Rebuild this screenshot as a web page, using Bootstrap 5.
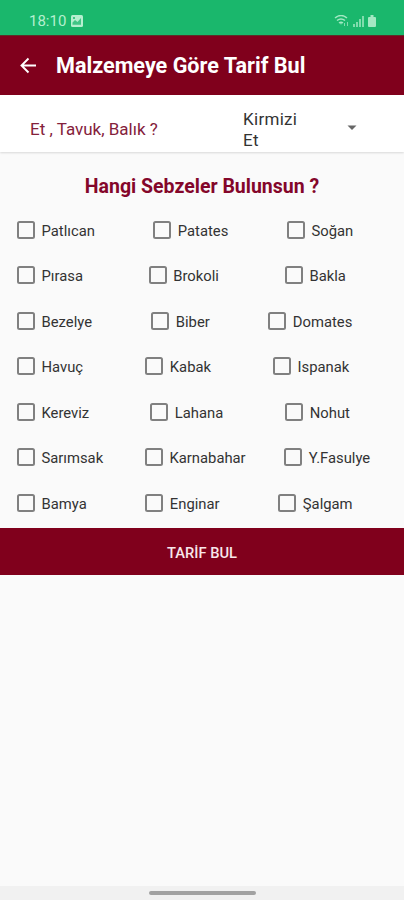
<!DOCTYPE html>
<html lang="tr">
<head>
<meta charset="utf-8">
<meta name="viewport" content="width=device-width, initial-scale=1">
<title>Malzemeye Göre Tarif Bul</title>
<link href="https://cdn.jsdelivr.net/npm/bootstrap@5.3.0/dist/css/bootstrap.min.css" rel="stylesheet">
<style>
body{font-family:Roboto,"Liberation Sans",sans-serif;background:#fafafa;height:900px;color:#333;overflow:hidden}
.status-strip{height:35px;background:#1ab76c;color:#b5efcf;font-size:15px;line-height:1;padding:7px 26px 0 29px}
.clock{padding-top:7px}
.title-bar{height:60px;background:#80001c;color:#fff;padding:0 20px 1px;border-top:1px solid #5c3028}
.title-bar h1{font-size:21.6px;line-height:1;padding:2px 0 0 19px;white-space:nowrap;font-weight:700}
.filter-bar{height:57px;background:#fff;padding-left:30px;box-shadow:0 1px 2px #0002}
.filter-name{width:213px;font-size:17px;color:#84213b;padding-top:22px}
.filter-value{width:104px;font-size:17px;line-height:21px;padding-top:14px;letter-spacing:.3px}
.filter-value span{display:block;width:60px}
.section-title{height:58px;padding-top:25px;font-size:19.5px;font-weight:700;color:#84062a;line-height:1}
.veg-row{height:45.45px;padding:11px 0 0 17px;font-size:14.8px;line-height:20px}
.veg-row .form-check{flex:none;gap:6.5px;min-height:0}
.veg-row .form-check-input{width:18px;height:18px;margin:0;float:none;border:2px solid #808080;border-radius:2.5px;background-color:transparent;flex:none}
.veg-row .form-check:first-child{width:var(--a)}
.veg-row .form-check:nth-child(2){width:var(--b)}
.r1{--a:136.3px;--b:133.7px}.r2{--a:131.7px;--b:136.3px}.r3{--a:134.3px;--b:117px}
.r4{--a:128.3px;--b:127.7px}.r5{--a:133.3px;--b:135px}.r6{--a:128px;--b:139.3px}.r7{--a:128.3px;--b:133px}
.find-btn{height:47px;background:#80001c;color:#f8e6ea;font-size:14.7px;font-weight:500;border:0}
.find-btn span{display:block;padding-top:2px}
.find-btn:hover{background:#6a0017;color:#fff}
.nav-strip{height:14px;background:#f1f1f1;padding-top:5px}
.nav-pill{width:107px;height:4px;background:#a2a2a2}
</style>
</head>
<body class="d-flex flex-column">
<div class="status-strip d-flex">
  <span class="clock">18:10</span>
  <svg class="ms-1 mt-2" width="14" height="12" viewBox="0 0 14 12"><rect x="1" width="12" height="12" rx="1.5" fill="#b5efcf"/><path d="M2.500 9.800V7.500L5 5l2.500 2 3.500-4v6.800z" fill="#1ab76c" opacity=".75"/><circle cx="4" cy="3" r="1" fill="#1ab76c"/></svg>
  <svg class="ms-auto mt-2" width="44" height="13" viewBox="0 0 44 13" fill="#a3e8c3"><path d="M1 3q6-5 12 0M3 5.500q4-3.200 8 0M5 8q2-1.500 4 0" fill="none" stroke="#a3e8c3" stroke-width="1.500"/><path d="M6 8h2L7 10zM10 8h1v3h-1zM13 7h1v4h-1zM19 9h2v3h-2zM22 7h2v5h-2zM25 4h2v8h-2zM28 1h2v11h-2z" opacity=".75"/><path d="M36.500 2V0h3v2h1.500q1 0 1 1v8q0 1-1 1h-6q-1 0-1-1V3q0-1 1-1z"/></svg>
</div>
<header class="title-bar d-flex align-items-center">
  <svg width="17" height="17" viewBox="0 0 17 17" fill="none" stroke="#fff" stroke-width="1.900"><path d="M16 8.500H2M8.500 1.500l-7 7 7 7"/></svg>
  <h1 class="mb-0">Malzemeye Göre Tarif Bul</h1>
</header>
<section class="filter-bar d-flex align-items-start">
  <div class="filter-name d-flex">Et , Tavuk, Balık ?</div>
  <div class="filter-value"><span>Kirmizi Et</span></div>
  <svg class="mt-4" width="10" height="18" viewBox="0 0 10 18"><path d="M.5 6.500h9L5 11z" fill="#666"/></svg>
</section>
<main>
  <h2 class="section-title text-center mb-0">Hangi Sebzeler Bulunsun ?</h2>
  <div class="veg-row r1 d-flex"><label class="form-check d-flex p-0 m-0"><input class="form-check-input" type="checkbox">Patlıcan</label><label class="form-check d-flex p-0 m-0"><input class="form-check-input" type="checkbox">Patates</label><label class="form-check d-flex p-0 m-0"><input class="form-check-input" type="checkbox">Soğan</label></div>
  <div class="veg-row r2 d-flex"><label class="form-check d-flex p-0 m-0"><input class="form-check-input" type="checkbox">Pırasa</label><label class="form-check d-flex p-0 m-0"><input class="form-check-input" type="checkbox">Brokoli</label><label class="form-check d-flex p-0 m-0"><input class="form-check-input" type="checkbox">Bakla</label></div>
  <div class="veg-row r3 d-flex"><label class="form-check d-flex p-0 m-0"><input class="form-check-input" type="checkbox">Bezelye</label><label class="form-check d-flex p-0 m-0"><input class="form-check-input" type="checkbox">Biber</label><label class="form-check d-flex p-0 m-0"><input class="form-check-input" type="checkbox">Domates</label></div>
  <div class="veg-row r4 d-flex"><label class="form-check d-flex p-0 m-0"><input class="form-check-input" type="checkbox">Havuç</label><label class="form-check d-flex p-0 m-0"><input class="form-check-input" type="checkbox">Kabak</label><label class="form-check d-flex p-0 m-0"><input class="form-check-input" type="checkbox">Ispanak</label></div>
  <div class="veg-row r5 d-flex"><label class="form-check d-flex p-0 m-0"><input class="form-check-input" type="checkbox">Kereviz</label><label class="form-check d-flex p-0 m-0"><input class="form-check-input" type="checkbox">Lahana</label><label class="form-check d-flex p-0 m-0"><input class="form-check-input" type="checkbox">Nohut</label></div>
  <div class="veg-row r6 d-flex"><label class="form-check d-flex p-0 m-0"><input class="form-check-input" type="checkbox">Sarımsak</label><label class="form-check d-flex p-0 m-0"><input class="form-check-input" type="checkbox">Karnabahar</label><label class="form-check d-flex p-0 m-0"><input class="form-check-input" type="checkbox">Y.Fasulye</label></div>
  <div class="veg-row r7 d-flex"><label class="form-check d-flex p-0 m-0"><input class="form-check-input" type="checkbox">Bamya</label><label class="form-check d-flex p-0 m-0"><input class="form-check-input" type="checkbox">Enginar</label><label class="form-check d-flex p-0 m-0"><input class="form-check-input" type="checkbox">Şalgam</label></div>
  <button class="find-btn btn rounded-0 w-100 d-block p-0" type="button"><span>TARİF BUL</span></button>
</main>
<footer class="nav-strip mt-auto"><div class="nav-pill rounded-pill mx-auto"></div></footer>
<script src="https://cdn.jsdelivr.net/npm/bootstrap@5.3.0/dist/js/bootstrap.bundle.min.js"></script>
</body>
</html>
